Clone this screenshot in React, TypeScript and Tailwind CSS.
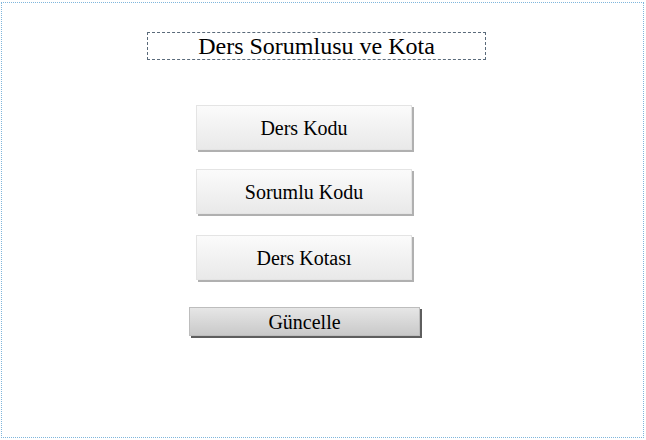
const fields = ["Ders Kodu", "Sorumlu Kodu", "Ders Kotası"];

const FieldButton = ({ label, mt }: { label: string; mt: string }) => (
  <div
    className={`${mt} ml-[194px] w-[216px] h-[45px] flex items-center justify-center bg-gradient-to-b from-[#fbfbfb] to-[#e9e9e9] border border-[#e4e4e4] shadow-[2px_2px_0_#b0b0b0] text-[20px] text-black`}
  >
    {label}
  </div>
);

const App = () => {
  return (
    <div className="w-[646px] h-[440px] bg-white pt-[2px] pl-[1px] font-['Liberation_Serif',serif]">
      <div className="w-[643px] h-[436px] border border-dotted border-[#7fb6dc] flex flex-col items-start">
        <div className="mt-[29px] ml-[145px] w-[339px] h-[28px] border border-dashed border-[#5a6a7a] flex items-center justify-center text-[24px] leading-none text-black">
          Ders Sorumlusu ve Kota
        </div>
        <FieldButton label={fields[0]} mt="mt-[45px]" />
        <FieldButton label={fields[1]} mt="mt-[19px]" />
        <FieldButton label={fields[2]} mt="mt-[21px]" />
        <button className="mt-[27px] ml-[187px] w-[231px] h-[29px] flex items-center justify-center bg-gradient-to-b from-[#e6e6e6] to-[#c9c9c9] border border-[#bdbdbd] shadow-[2px_2px_0_#5e5e5e] text-[20px] leading-none text-black">
          Güncelle
        </button>
      </div>
    </div>
  );
};

export default App;
